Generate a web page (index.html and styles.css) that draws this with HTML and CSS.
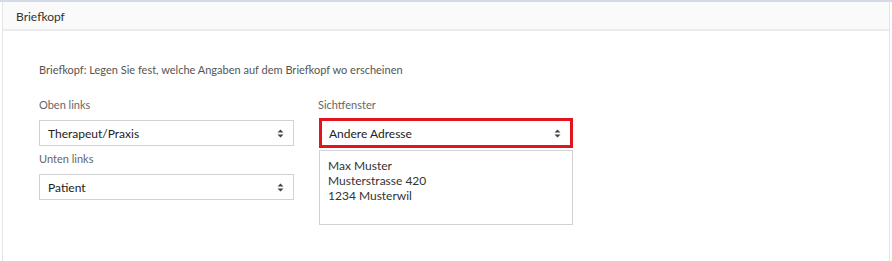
FILE: index.html
```html
<!DOCTYPE html>
<html lang="de">
<head>
    <meta charset="UTF-8">
    <title>Briefkopf</title>
    <link rel="stylesheet" href="styles.css">
</head>
<body>
    <div class="panel">
        <div class="panel-heading">Briefkopf</div>
        <div class="panel-body">
            <p class="intro">Briefkopf: Legen Sie fest, welche Angaben auf dem Briefkopf wo erscheinen</p>
            <div class="columns">
                <div class="column">
                    <label class="field-label">Oben links</label>
                    <div class="select">
                        <span>Therapeut/Praxis</span>
                        <svg class="caret" width="7" height="9" viewBox="0 0 7 9"><path d="M3.5 0.5L6.5 3.5H0.5Z M3.5 8.5L6.5 5.5H0.5Z" fill="#444"/></svg>
                    </div>
                    <label class="field-label">Unten links</label>
                    <div class="select">
                        <span>Patient</span>
                        <svg class="caret" width="7" height="9" viewBox="0 0 7 9"><path d="M3.5 0.5L6.5 3.5H0.5Z M3.5 8.5L6.5 5.5H0.5Z" fill="#444"/></svg>
                    </div>
                </div>
                <div class="column">
                    <label class="field-label">Sichtfenster</label>
                    <div class="select select-highlight">
                        <span>Andere Adresse</span>
                        <svg class="caret" width="7" height="9" viewBox="0 0 7 9"><path d="M3.5 0.5L6.5 3.5H0.5Z M3.5 8.5L6.5 5.5H0.5Z" fill="#444"/></svg>
                    </div>
                    <div class="address">
                        Max Muster<br>
                        Musterstrasse 420<br>
                        1234 Musterwil
                    </div>
                </div>
            </div>
        </div>
    </div>
</body>
</html>
```

FILE: styles.css
```css
* {
    box-sizing: border-box;
    margin: 0;
    padding: 0;
}

body {
    font-family: Lato, 'Open Sans', sans-serif;
    background-color: #fff;
    border-top: 2px solid #d3d9e6;
    height: 261px;
    overflow: hidden;
    color: #333;
}

.panel {
    margin: 0 2px 0 2px;
    border-left: 1px solid #e4e4e4;
    border-right: 1px solid #e4e4e4;
    height: 259px;
}

.panel-heading {
    height: 29px;
    padding: 7px 0 0 13px;
    background-color: #fafafa;
    border-bottom: 2px solid #ebebeb;
    font-size: 12px;
    color: #333;
}

.panel-body {
    padding: 32px 0 0 36px;
}

.intro {
    font-size: 11px;
    color: #555;
    line-height: 14px;
    margin-bottom: 21px;
}

.columns {
    display: flex;
    gap: 24px;
}

.column {
    width: 255px;
    display: flex;
    flex-direction: column;
}

.field-label {
    font-size: 11px;
    color: #666;
    line-height: 14px;
    margin-bottom: 8px;
}

.select {
    height: 26px;
    border: 1px solid #d2d2d2;
    display: flex;
    align-items: center;
    justify-content: space-between;
    padding: 0 9px 0 8px;
    font-size: 12px;
    color: #222;
    margin-bottom: 6px;
}

.select-highlight {
    height: 30px;
    border: 3px solid #e3141e;
    padding: 0 9px 0 7px;
    margin: -2px 0 2px 1px;
}

.caret {
    display: block;
}

.address {
    margin-left: 1px;
    width: 254px;
    height: 75px;
    border: 1px solid #d2d2d2;
    padding: 7px 8px;
    font-size: 12px;
    line-height: 15px;
    color: #333;
}
```
